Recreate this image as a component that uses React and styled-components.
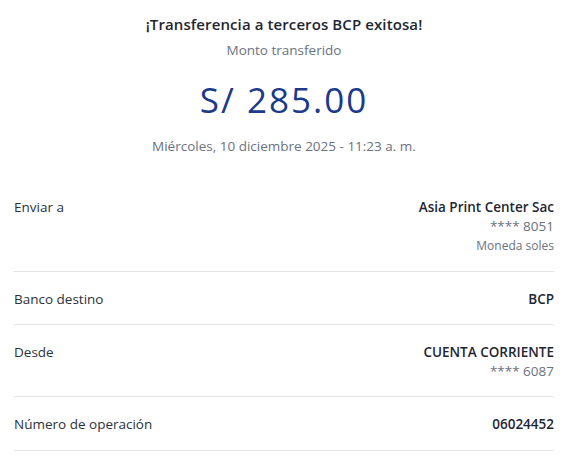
import React from 'react'
import styled, { createGlobalStyle } from 'styled-components'

const GlobalStyle = createGlobalStyle`
  body {
    margin: 0;
    background: #fff;
    font-family: 'Open Sans', 'Noto Sans', sans-serif;
  }
`

const Page = styled.div`
  width: 568px;
  padding: 0 14px;
  box-sizing: border-box;
`

const Header = styled.div`
  display: flex;
  flex-direction: column;
  align-items: center;
  padding-top: 14px;
`

const Title = styled.h1`
  margin: 0;
  font-size: 15px;
  line-height: 20px;
  font-weight: 600;
  letter-spacing: 0.1px;
  color: #1f2633;
`

const Caption = styled.div`
  margin-top: 6px;
  font-size: 13.5px;
  line-height: 20px;
  color: #6b7280;
`

const Amount = styled.div`
  margin-top: 20px;
  font-size: 35px;
  line-height: 40px;
  letter-spacing: 2px;
  color: #1b3a8a;
`

const DateLine = styled.div`
  margin-top: 16px;
  font-size: 13.5px;
  line-height: 20px;
  color: #6b7280;
`

const List = styled.div`
  margin-top: 24px;
`

const Row = styled.div`
  display: flex;
  justify-content: space-between;
  align-items: flex-start;
  padding: 18px 0 15px;
  border-bottom: 1px solid #e3e5e8;

  &:last-child {
    padding-bottom: 16px;
  }
`

const Label = styled.div`
  font-size: 13.5px;
  line-height: 19px;
  color: #2b313b;
`

const Values = styled.div`
  display: flex;
  flex-direction: column;
  align-items: flex-end;
  text-align: right;
`

const Value = styled.div`
  font-size: 13.5px;
  line-height: 19px;
  font-weight: 600;
  color: #1f2633;
`

const Sub = styled.div`
  font-size: ${p => (p.small ? '12px' : '13.5px')};
  line-height: ${p => (p.small ? '20px' : '19px')};
  color: #6b7280;
`

const rows = [
  { label: 'Enviar a', value: 'Asia Print Center Sac', subs: [['**** 8051'], ['Moneda soles', true]] },
  { label: 'Banco destino', value: 'BCP', subs: [] },
  { label: 'Desde', value: 'CUENTA CORRIENTE', subs: [['**** 6087']] },
  { label: 'Número de operación', value: '06024452', subs: [] },
]

const App = () => (
  <Page>
    <GlobalStyle />
    <Header>
      <Title>¡Transferencia a terceros BCP exitosa!</Title>
      <Caption>Monto transferido</Caption>
      <Amount>S/ 285.00</Amount>
      <DateLine>Miércoles, 10 diciembre 2025 - 11:23 a. m.</DateLine>
    </Header>
    <List>
      {rows.map(r => (
        <Row key={r.label}>
          <Label>{r.label}</Label>
          <Values>
            <Value>{r.value}</Value>
            {r.subs.map(([t, small]) => (
              <Sub key={t} small={small}>
                {t}
              </Sub>
            ))}
          </Values>
        </Row>
      ))}
    </List>
  </Page>
)

export default App
